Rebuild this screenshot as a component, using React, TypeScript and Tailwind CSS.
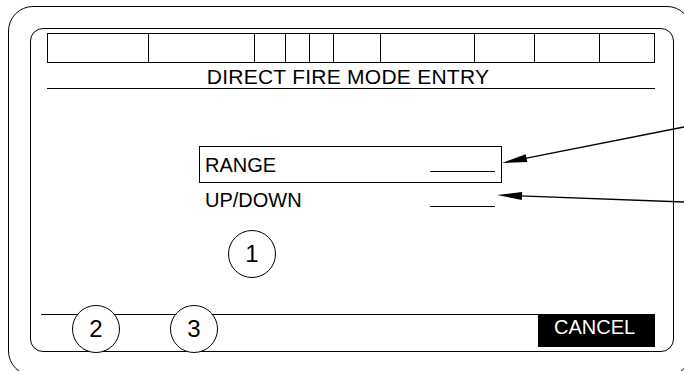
import React from 'react';

const cells = [100, 106, 31, 24, 24, 47, 94, 60, 65, 55];

function Callout({ n, className = '' }: { n: string; className?: string }) {
  return (
    <div className={`w-[48px] h-[48px] rounded-full border border-black bg-white flex items-center justify-center text-[24px] leading-none ${className}`}>
      {n}
    </div>
  );
}

export default function App() {
  return (
    <div className="relative w-[684px] h-[371px] overflow-hidden bg-white text-black pl-[8px] pt-[6px] font-['Liberation_Sans',Arial,sans-serif]">
      {/* outer bezel */}
      <div className="w-[684px] h-[370px] border border-black rounded-[25px] pl-[21px] pt-[21px]">
        {/* screen */}
        <div className="relative w-[644px] h-[324px] border border-black rounded-[13px] flex flex-col">
          {/* status bar */}
          <div className="ml-[16px] mt-[4px] w-[608px] h-[30px] border border-black flex">
            {cells.map((w, i) => (
              <div key={i} style={{ width: w }} className={i === 0 ? 'h-full' : 'h-full border-l border-black'} />
            ))}
          </div>

          {/* title */}
          <div className="ml-[16px] mt-[3px] w-[608px] border-b border-black pb-[1px] pr-[6px] text-center text-[21px] leading-[21px] tracking-[0.25px]">
            DIRECT FIRE MODE ENTRY
          </div>

          {/* range field */}
          <div className="ml-[168px] mt-[57px] w-[303px] h-[37px] border border-black flex justify-between text-[20px] leading-[20px]">
            <span className="ml-[5px] mt-[8px]">RANGE</span>
            <div className="w-[65px] h-px bg-black mt-[24px] mr-[6px]" />
          </div>

          {/* up/down field */}
          <div className="ml-[168px] mt-[7px] w-[303px] flex justify-between text-[20px] leading-[20px]">
            <span className="ml-[6px]">UP/DOWN</span>
            <div className="w-[65px] h-px bg-black mt-[16px] mr-[7px]" />
          </div>

          <Callout n="1" className="ml-[197px] mt-[20px]" />

          {/* softkey row */}
          <div className="mt-auto mb-[4px] ml-[10px] w-[614px] flex">
            <div className="flex-1 border-t border-black" />
            <div className="w-[117px] h-[33px] bg-black text-white pl-[16px] pt-[3px] text-[20px] leading-[20px]">
              CANCEL
            </div>
          </div>

          {/* callouts over the softkey line */}
          <Callout n="2" className="absolute left-[41px] top-[276px]" />
          <Callout n="3" className="absolute left-[139px] top-[276px]" />
        </div>
      </div>

      {/* leader arrows */}
      <svg className="absolute left-0 top-0" width="684" height="371" viewBox="0 0 684 371">
        <line x1="684" y1="127" x2="524" y2="158.6" stroke="black" strokeWidth="1.3" />
        <polygon points="502,163 527.3,162.1 525.7,154.2" fill="black" />
        <line x1="684" y1="202" x2="520" y2="195.9" stroke="black" strokeWidth="1.3" />
        <polygon points="497,195 521.85,199.9 522.15,191.9" fill="black" />
      </svg>
    </div>
  );
}
